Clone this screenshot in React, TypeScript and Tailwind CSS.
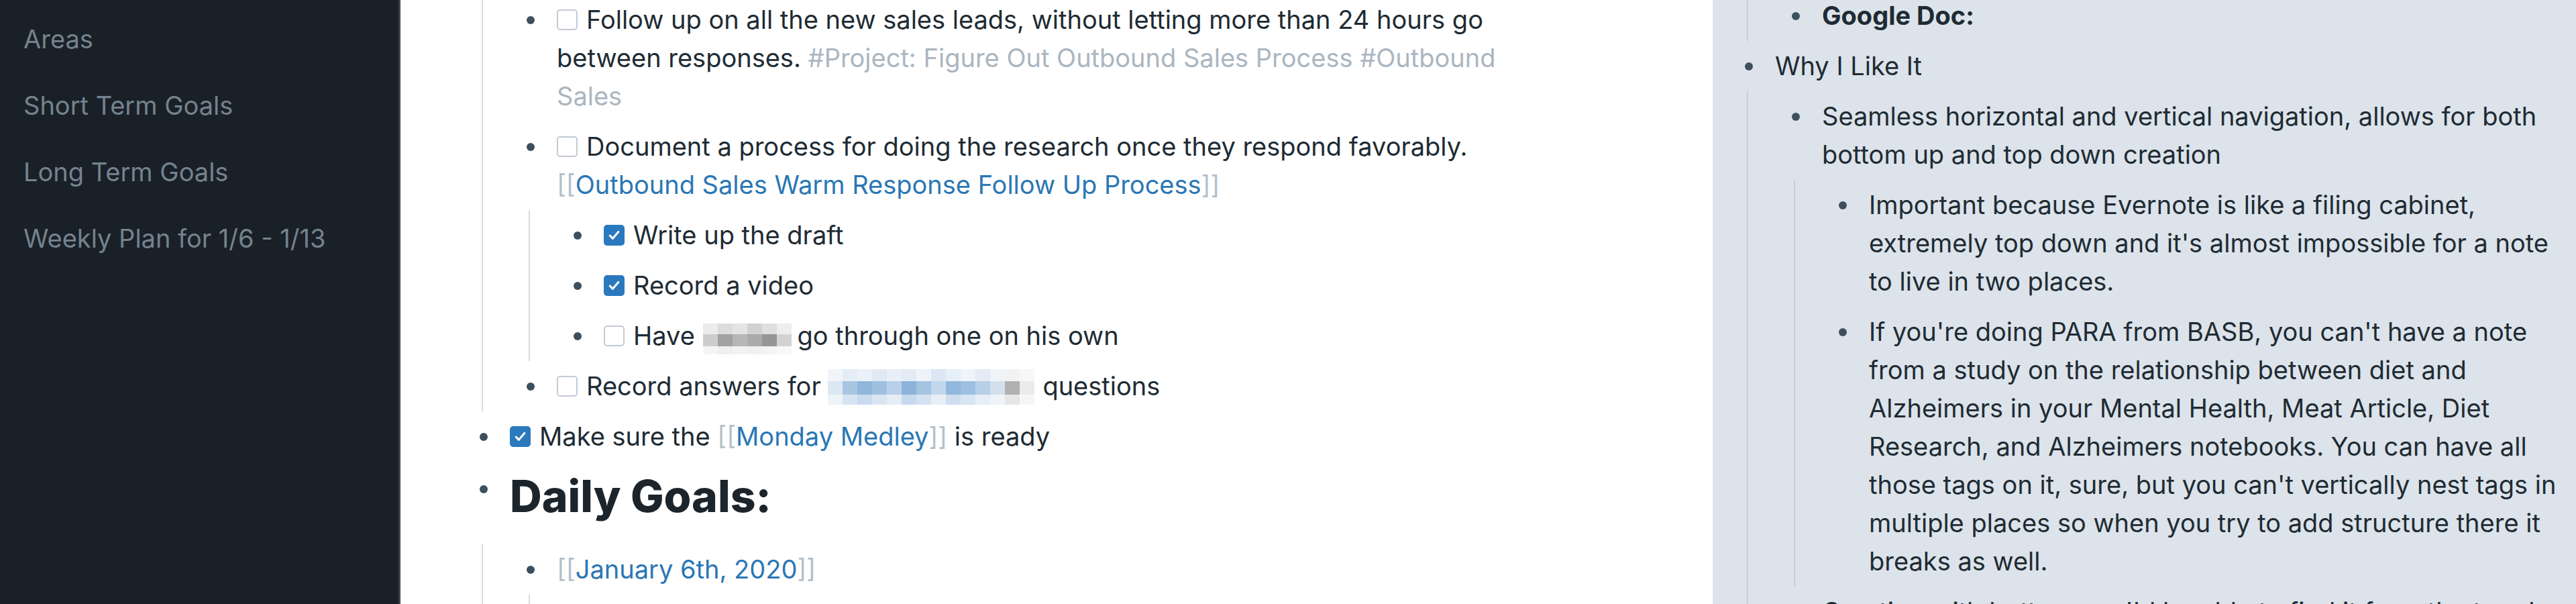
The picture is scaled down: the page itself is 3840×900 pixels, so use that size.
import React from "react";

type Kid = React.ReactNode;

function Dot({ heading }: { heading?: boolean }) {
  return (
    <div
      className={`flex h-[57px] w-[78px] shrink-0 items-center justify-center ${
        heading ? "mt-[12px]" : "mt-[9px]"
      }`}
    >
      <span className="block h-[12px] w-[12px] rounded-full bg-[#3d4f5d]" />
    </div>
  );
}

function Kids({ children, line }: { children: Kid; line?: string }) {
  return (
    <div className={`ml-[36px] border-l-2 pl-[32px] ${line || "border-[#d5dde4]"}`}>
      {children}
    </div>
  );
}

function Block({
  text,
  children,
  heading,
  line,
}: {
  text: Kid;
  children?: Kid;
  heading?: boolean;
  line?: string;
}) {
  return (
    <div>
      <div className="flex">
        <Dot heading={heading} />
        <div
          className={
            heading
              ? "whitespace-nowrap pb-[29px] pt-[9px] text-[66px] font-extrabold leading-[85px] text-[#1c252c]"
              : "whitespace-nowrap py-[9px]"
          }
        >
          {text}
        </div>
      </div>
      {children && <Kids line={line}>{children}</Kids>}
    </div>
  );
}

function Box({ checked }: { checked?: boolean }) {
  if (checked) {
    return (
      <span className="mr-[13px] inline-block h-[31px] w-[31px] rounded-[5px] bg-[#2b79bd] align-[-2px]">
        <svg viewBox="0 0 16 16" className="mx-auto mt-[4px] block h-[23px] w-[23px]">
          <path
            d="M3.6 8.4l2.9 3 5.9-6.9"
            stroke="white"
            strokeWidth="2.1"
            fill="none"
            strokeLinecap="round"
            strokeLinejoin="round"
          />
        </svg>
      </span>
    );
  }
  return (
    <span className="mr-[13px] inline-block h-[31px] w-[31px] rounded-[5px] border-2 border-[#c3cbd3] bg-white align-[-2px]" />
  );
}

function Ref({ children }: { children: string }) {
  return (
    <span>
      <span className="text-[#b3bfc9]">[[</span>
      <span className="text-[#2a77b5]">{children}</span>
      <span className="text-[#b3bfc9]">]]</span>
    </span>
  );
}

// pixelated name, as the screenshot hides it
function Mosaic({ rows, heights }: { rows: string[][]; heights: number[] }) {
  return (
    <span className="flex flex-col">
      {rows.map((row, r) => (
        <span key={r} className="flex" style={{ height: heights[r] }}>
          {row.map((c, i) => (
            <span key={i} className="w-[22px]" style={{ backgroundColor: c }} />
          ))}
        </span>
      ))}
    </span>
  );
}

const grayBlur = [
  ["#ececec", "#dcdcdc", "#e4e4e4", "#d2d2d2", "#dfdfdf", "#eeeeee"],
  ["#cdcdcd", "#a2a2a2", "#b7b7b7", "#ababab", "#969696", "#d3d3d3"],
  ["#f5f5f5", "#efefef", "#f2f2f2", "#f0f0f0", "#f4f4f4", "#f8f8f8"],
];

const blueBlur = [
  ["#f1f5fa", "#e4edf6", "#eaf1f8", "#dfe9f4", "#e8eff7", "#e2ebf5", "#edf3f9", "#dce7f3", "#e6eef7", "#eef4fa", "#e3ecf6", "#f0f4f9", "#f2f2f2", "#f7f7f7"],
  ["#dbe7f3", "#a8c6e2", "#8fb6db", "#9ec0e0", "#b9d1e8", "#8cb3da", "#a3c3e1", "#c2d7eb", "#91b7dc", "#9dbfe0", "#b7cfe7", "#d3e0ec", "#b0b0b0", "#ebebeb"],
  ["#eef3f9", "#d6e4f1", "#c9dbee", "#d9e6f2", "#e4edf6", "#c6d9ed", "#d3e2f1", "#e8eff7", "#cddeef", "#d8e5f2", "#e6eef7", "#eff3f8", "#e6e6e6", "#f6f6f6"],
];

const sideItems = ["Areas", "Short Term Goals", "Long Term Goals", "Weekly Plan for 1/6 - 1/13"];

export default function App() {
  const panelLine = "border-[#c6cfd7]";

  return (
    <div className="flex h-[900px] w-[3840px] overflow-hidden font-['Inter',_sans-serif] text-[38px] leading-[57px] text-[#202b33]">
      {/* Left sidebar */}
      <div className="w-[597px] shrink-0 border-r-[3px] border-[#3b444c] bg-[#1a2027] pt-[9px]">
        {sideItems.map((s) => (
          <div key={s} className="py-[21px] pl-[35px] text-[#74838f]">
            {s}
          </div>
        ))}
      </div>

      {/* Main page */}
      <div className="w-[1956px] shrink-0 bg-white">
        <div className="-mt-[8px] pl-[85px]">
          <Kids>
            <Block
              text={
                <>
                  <Box />
                  Follow up on all the new sales leads, without letting more than 24 hours go
                  <br />
                  between responses.{" "}
                  <span className="text-[#abb6c0]">#Project: Figure Out Outbound Sales Process #Outbound</span>
                  <br />
                  <span className="text-[#abb6c0]">Sales</span>
                </>
              }
            />
            <Block
              text={
                <>
                  <Box />
                  Document a process for doing the research once they respond favorably.
                  <br />
                  <Ref>Outbound Sales Warm Response Follow Up Process</Ref>
                </>
              }
            >
              <Block
                text={
                  <>
                    <Box checked />
                    Write up the draft
                  </>
                }
              />
              <Block
                text={
                  <>
                    <Box checked />
                    Record a video
                  </>
                }
              />
              <Block
                text={
                  <>
                    <Box />
                    Have{" "}
                    <span className="ml-[2px] mr-[8px] inline-block overflow-hidden align-[-14px]">
                      <Mosaic rows={grayBlur} heights={[16, 18, 12]} />
                    </span>
                    go through one on his own
                  </>
                }
              />
            </Block>
            <Block
              text={
                <>
                  <Box />
                  Record answers for{" "}
                  <span className="mr-[12px] inline-block overflow-hidden align-[-14px]">
                    <Mosaic rows={blueBlur} heights={[18, 20, 15]} />
                  </span>
                  questions
                </>
              }
            />
          </Kids>
          <Block
            text={
              <>
                <Box checked />
                Make sure the <Ref>Monday Medley</Ref> is ready
              </>
            }
          />
          <Block heading text="Daily Goals:">
            <Block text={<Ref>January 6th, 2020</Ref>}>
              <div className="h-[80px]" />
            </Block>
          </Block>
        </div>
      </div>

      {/* Right sidebar */}
      <div className="min-w-0 flex-1 bg-[#dce3ea]">
        <div className="-mt-[14px] pl-[15px]">
          <Kids line={panelLine}>
            <Block text={<span className="font-bold">Google Doc:</span>} />
          </Kids>
          <Block line={panelLine} text="Why I Like It">
            <Block
              line={panelLine}
              text={
                <>
                  Seamless horizontal and vertical navigation, allows for both
                  <br />
                  bottom up and top down creation
                </>
              }
            >
              <Block
                text={
                  <>
                    Important because Evernote is like a filing cabinet,
                    <br />
                    extremely top down and it's almost impossible for a note
                    <br />
                    to live in two places.
                  </>
                }
              />
              <Block
                text={
                  <>
                    If you're doing PARA from BASB, you can't have a note
                    <br />
                    from a study on the relationship between diet and
                    <br />
                    Alzheimers in your Mental Health, Meat Article, Diet
                    <br />
                    Research, and Alzheimers notebooks. You can have all
                    <br />
                    those tags on it, sure, but you can't vertically nest tags in
                    <br />
                    multiple places so when you try to add structure there it
                    <br />
                    breaks as well.
                  </>
                }
              />
            </Block>
            <Block text="Creating with bottom up, I'd be able to find it from the top down" />
          </Block>
        </div>
      </div>
    </div>
  );
}
